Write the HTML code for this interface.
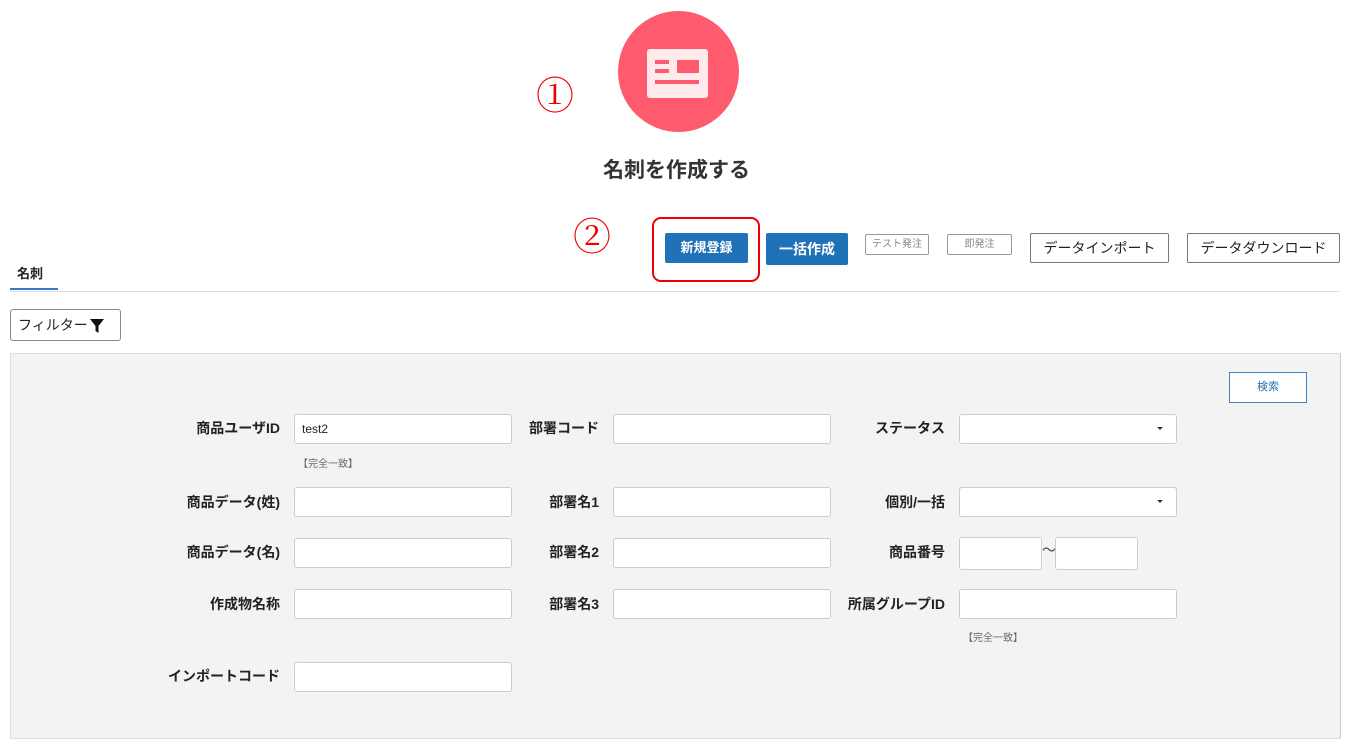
<!DOCTYPE html>
<html><head><meta charset="utf-8"><style>
*{box-sizing:border-box;margin:0;padding:0}
body{width:1351px;height:742px;background:#fff;position:relative;overflow:hidden;font-family:"Liberation Sans","Noto Sans CJK JP",sans-serif;color:#222}
.a{position:absolute}
.lbl{position:absolute;font-size:14px;font-weight:bold;text-align:right;width:200px;line-height:30px}
.in{position:absolute;width:218px;height:30px;background:#fff;border:1px solid #ccc;border-radius:3px}
.note{position:absolute;font-size:10px;color:#666}
.btn{position:absolute;font-size:13px;text-align:center}
</style></head><body>
<div class="a" style="left:618px;top:11px;width:121px;height:121px;border-radius:50%;background:#fe5c6e"></div>
<div class="a" style="left:647px;top:49px;width:61px;height:49px;background:#ffeaec;border-radius:3px"></div>
<div class="a" style="left:655px;top:60px;width:14px;height:4px;background:#fe5c6e"></div>
<div class="a" style="left:655px;top:69px;width:14px;height:4px;background:#fe5c6e"></div>
<div class="a" style="left:677px;top:60px;width:22px;height:13px;background:#fe5c6e"></div>
<div class="a" style="left:655px;top:80px;width:44px;height:4px;background:#fe5c6e"></div>
<div class="a" style="left:536px;top:70px;font-size:38px;color:#e00;font-family:'Noto Serif CJK SC',serif;line-height:46px">①</div>
<div class="a" style="left:0;width:1351px;top:157px;text-align:center;font-size:21px;font-weight:bold;color:#333;line-height:28px;padding-left:2px">名刺を作成する</div>
<div class="a" style="left:573px;top:211px;font-size:38px;color:#e00;font-family:'Noto Serif CJK SC',serif;line-height:46px">②</div>
<div class="a" style="left:652px;top:217px;width:108px;height:65px;border:2px solid #e00;border-radius:9px"></div>
<div class="btn" style="left:665px;top:233px;width:83px;height:30px;background:#1f72b8;color:#fff;line-height:30px;border-radius:2px;font-weight:bold">新規登録</div>
<div class="btn" style="left:766px;top:233px;width:82px;height:32px;background:#1f72b8;color:#fff;line-height:32px;font-size:14px;border-radius:2px;font-weight:bold">一括作成</div>
<div class="btn" style="left:865px;top:234px;width:64px;height:21px;border:1px solid #999;color:#888;font-size:10px;line-height:19px;border-radius:2px">テスト発注</div>
<div class="btn" style="left:947px;top:234px;width:65px;height:21px;border:1px solid #999;color:#888;font-size:10px;line-height:19px;border-radius:2px">即発注</div>
<div class="btn" style="left:1030px;top:233px;width:139px;height:30px;border:1px solid #777;line-height:28px;border-radius:2px;font-size:14px">データインポート</div>
<div class="btn" style="left:1187px;top:233px;width:153px;height:30px;border:1px solid #777;line-height:28px;border-radius:2px;font-size:14px">データダウンロード</div>
<div class="a" style="left:17px;top:265px;font-size:13px;font-weight:bold;line-height:18px">名刺</div>
<div class="a" style="left:10px;top:288px;width:48px;height:2px;background:#3a78c3"></div>
<div class="a" style="left:10px;top:291px;width:1330px;height:1px;background:#ddd"></div>
<div class="a" style="left:10px;top:309px;width:111px;height:32px;border:1px solid #888;border-radius:3px;font-size:14px;line-height:30px;padding-left:7px">フィルター
<svg style="position:absolute;left:78px;top:8px" width="16" height="16" viewBox="0 0 16 16"><path d="M1 1H15L9.5 8V15L6.5 13V8Z" fill="#111"/></svg></div>
<div class="a" style="left:10px;top:353px;width:1331px;height:386px;background:#f3f3f3;border:1px solid #ddd;border-right:1px solid #ccc"></div>
<div class="btn" style="left:1229px;top:372px;width:78px;height:31px;background:#fff;border:1px solid #3a84c8;color:#2a70b0;font-size:11px;line-height:29px">検索</div>
<div class="lbl" style="left:80px;top:413px">商品ユーザID</div>
<div class="in" style="left:294px;top:414px;font-size:12px;line-height:28px;padding-left:7px">test2</div>
<div class="note" style="left:298px;top:455px">【完全一致】</div>
<div class="lbl" style="left:399px;top:413px">部署コード</div>
<div class="in" style="left:613px;top:414px"></div>
<div class="lbl" style="left:745px;top:413px">ステータス</div>
<div class="in" style="left:959px;top:414px"><span style="position:absolute;right:13px;top:12px;border:3px solid transparent;border-top:3px solid #333"></span></div>
<div class="lbl" style="left:80px;top:487px">商品データ(姓)</div>
<div class="in" style="left:294px;top:487px"></div>
<div class="lbl" style="left:399px;top:487px">部署名1</div>
<div class="in" style="left:613px;top:487px"></div>
<div class="lbl" style="left:745px;top:487px">個別/一括</div>
<div class="in" style="left:959px;top:487px"><span style="position:absolute;right:13px;top:12px;border:3px solid transparent;border-top:3px solid #333"></span></div>
<div class="lbl" style="left:80px;top:537px">商品データ(名)</div>
<div class="in" style="left:294px;top:538px"></div>
<div class="lbl" style="left:399px;top:537px">部署名2</div>
<div class="in" style="left:613px;top:538px"></div>
<div class="lbl" style="left:745px;top:537px">商品番号</div>
<div class="in" style="left:959px;top:537px;width:83px;height:33px"></div>
<div class="a" style="left:1042px;top:540px;font-size:14px;color:#444">〜</div>
<div class="in" style="left:1055px;top:537px;width:83px;height:33px"></div>
<div class="lbl" style="left:80px;top:589px">作成物名称</div>
<div class="in" style="left:294px;top:589px"></div>
<div class="lbl" style="left:399px;top:589px">部署名3</div>
<div class="in" style="left:613px;top:589px"></div>
<div class="lbl" style="left:745px;top:589px">所属グループID</div>
<div class="in" style="left:959px;top:589px"></div>
<div class="note" style="left:963px;top:629px">【完全一致】</div>
<div class="lbl" style="left:80px;top:661px">インポートコード</div>
<div class="in" style="left:294px;top:662px"></div>
</body></html>
